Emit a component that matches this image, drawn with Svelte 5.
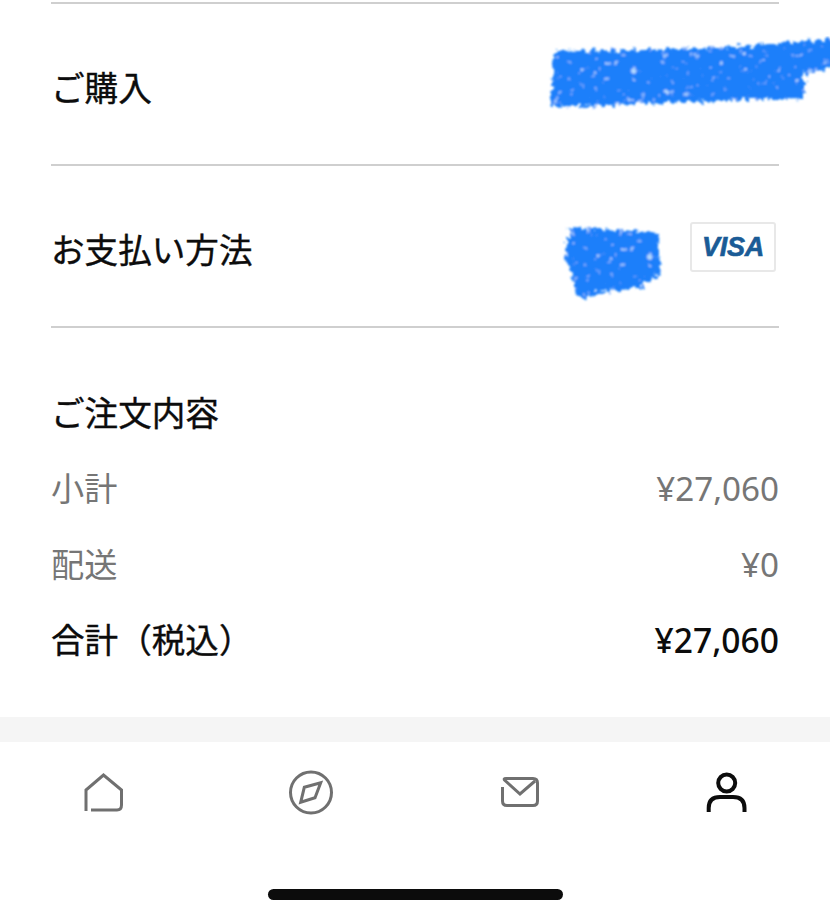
<script>
    const summary = [
        { label: '小計', value: '¥27,060' },
        { label: '配送', value: '¥0' },
        { label: '合計（税込）', value: '¥27,060', total: true }
    ];
</script>

<svg class="defs" width="0" height="0" aria-hidden="true">
    <filter id="crayon" x="-10%" y="-20%" width="120%" height="140%">
        <feTurbulence type="fractalNoise" baseFrequency="0.2" numOctaves="2" seed="4" result="noise" />
        <feDisplacementMap in="SourceGraphic" in2="noise" scale="10" result="shape" />
        <feTurbulence type="fractalNoise" baseFrequency="0.13" numOctaves="3" seed="11" />
        <feColorMatrix values="0 0 0 0 0.45  0 0 0 0 0.7  0 0 0 0 1  6 0 0 0 -4" />
        <feComposite in2="shape" operator="in" result="flecks" />
        <feMerge result="merged">
            <feMergeNode in="shape" />
            <feMergeNode in="flecks" />
        </feMerge>
        <feGaussianBlur in="merged" stdDeviation="0.9" />
    </filter>
</svg>

<div class="page">
    <main class="content">
        <section class="row">
            <h2>ご購入</h2>
            <svg class="scribble-address" viewBox="0 0 290 80" aria-hidden="true">
                <path d="M8 15 L100 14 L200 10 L288 3 V31 L258 38 V62 L150 66 L4 71 L7 40 Z" />
            </svg>
        </section>

        <section class="row">
            <h2>お支払い方法</h2>
            <div class="payment">
                <svg class="scribble-card" viewBox="0 0 104 84" aria-hidden="true">
                    <path d="M7 6 L60 8 L96 11 L98 52 L76 66 L36 70 L24 78 L13 72 L8 45 L3 38 Z" />
                </svg>
                <div class="visa">VISA</div>
            </div>
        </section>

        <section class="order">
            <h2>ご注文内容</h2>
            <dl>
                {#each summary as item}
                    <div class="line" class:total={item.total}>
                        <dt>{item.label}</dt>
                        <dd>{item.value}</dd>
                    </div>
                {/each}
            </dl>
        </section>
    </main>

    <div class="band"></div>

    <nav class="tabs">
        <svg viewBox="0 0 48 48" aria-hidden="true">
            <path d="M6 41 V20 L23.5 5 L41.5 20 V35 Q41.5 40 37 40 H11" />
        </svg>
        <svg viewBox="0 0 48 48" aria-hidden="true">
            <circle cx="24" cy="22.5" r="20.5" />
            <path d="M17.3 17.3 L33.7 12.7 L28 27.7 L13.7 32.3 Z" />
        </svg>
        <svg viewBox="0 0 48 48" aria-hidden="true">
            <path d="M7.5 17 V31 Q7.5 35.5 12 35.5 H38 Q42.5 35.5 42.5 31 V13 Q42.5 8.5 38 8.5 H11 Q8 8.5 10 10.5 L25 24 L40 11" />
        </svg>
        <svg class="active" viewBox="0 0 48 48" aria-hidden="true">
            <circle cx="24.7" cy="13" r="8.5" />
            <path d="M6.7 42 V38 Q6.7 27 18 27 H31 Q42.5 27 42.5 38 V42" />
        </svg>
    </nav>

    <div class="home-bar"></div>
</div>

<style>
    :global(body) {
        background: #fff;
    }

    .defs {
        position: absolute;
    }

    .page {
        height: 917px;
        overflow: hidden;
        display: flex;
        flex-direction: column;
        color: #0c0c0c;
        font-family: "Noto Sans", "Noto Sans CJK JP", sans-serif;
    }

    .content {
        height: 717px;
        padding: 2px 51px 0 51px;
        box-sizing: border-box;
    }

    h2 {
        margin: 0;
        font-size: 33.6px;
        font-weight: 400;
        line-height: 46px;
        -webkit-text-stroke: 0.4px #0c0c0c;
    }

    .row {
        position: relative;
        height: 162px;
        box-sizing: border-box;
        border-top: 2px solid #cfcfcf;
        display: flex;
        align-items: center;
        justify-content: space-between;
        padding-top: 8px;
    }

    .scribble-address {
        position: absolute;
        left: 495px;
        top: 32px;
        width: 290px;
        height: 80px;
    }

    .scribble-address path,
    .scribble-card path {
        fill: #1d7ffa;
        filter: url(#crayon);
    }

    .payment {
        display: flex;
        align-items: flex-start;
        gap: 24px;
        margin: 28px 3px 0 0;
    }

    .scribble-card {
        width: 104px;
        height: 84px;
    }

    .visa {
        width: 86px;
        height: 50px;
        box-sizing: border-box;
        border: 2px solid #e8e8e8;
        border-radius: 3px;
        display: flex;
        align-items: center;
        justify-content: center;
        color: #1a5b96;
        font-family: "Liberation Sans", sans-serif;
        font-size: 27px;
        font-style: italic;
        font-weight: 700;
        letter-spacing: -0.3px;
        -webkit-text-stroke: 0.6px #1a5b96;
    }

    .order {
        border-top: 2px solid #cfcfcf;
        padding-top: 62px;
    }

    dl {
        margin: 30px 0 0;
    }

    .line {
        display: flex;
        justify-content: space-between;
        height: 75.5px;
        line-height: 46px;
        font-size: 33.2px;
        color: #767676;
    }

    dd {
        margin: 0;
    }

    .total {
        color: #0c0c0c;
        font-size: 33.6px;
        -webkit-text-stroke: 0.4px #0c0c0c;
    }

    .total dd {
        font-weight: 500;
        -webkit-text-stroke: 0;
    }

    .band {
        height: 25px;
        background: #f5f5f5;
    }

    .tabs {
        display: grid;
        grid-template-columns: repeat(4, 1fr);
        justify-items: center;
        padding-top: 28px;
    }

    .tabs svg {
        width: 48px;
        height: 48px;
        fill: none;
        stroke: #707070;
        stroke-width: 3;
    }

    .tabs svg.active {
        stroke: #0c0c0c;
        stroke-width: 4;
    }

    .home-bar {
        width: 295px;
        height: 11px;
        margin: 71px auto 0;
        border-radius: 6px;
        background: #0c0c0c;
    }
</style>
